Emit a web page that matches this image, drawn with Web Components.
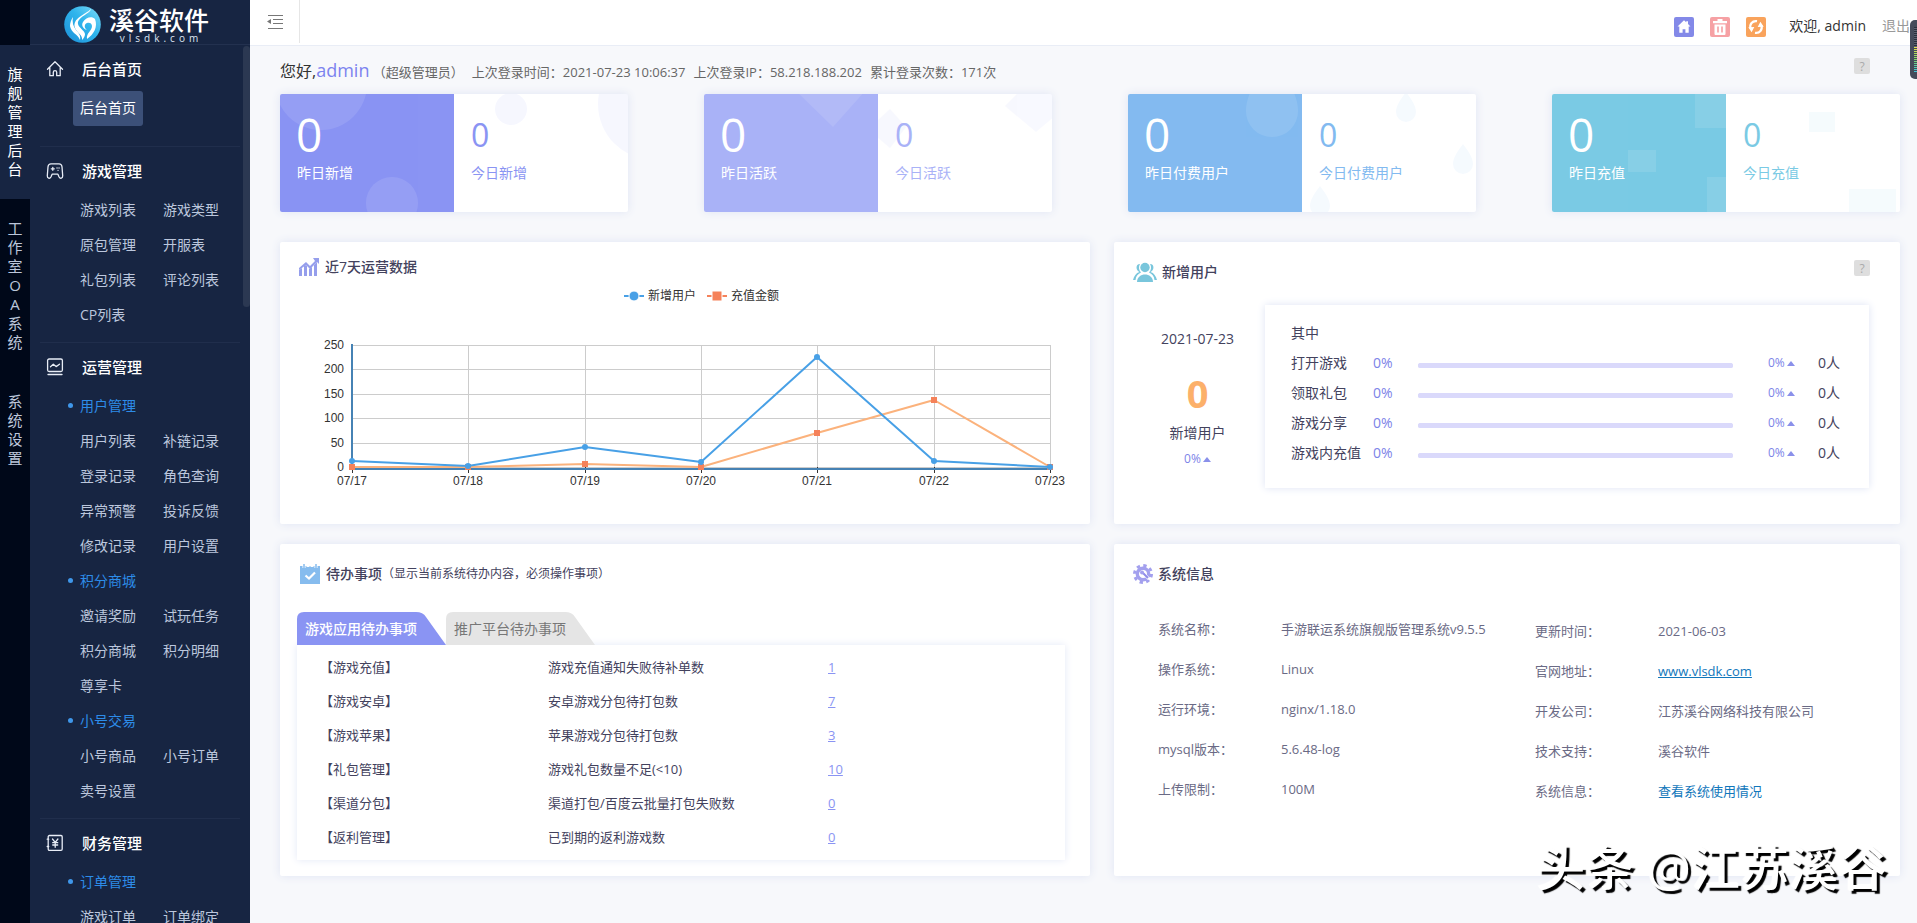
<!DOCTYPE html>
<html lang="zh-CN">
<head>
<meta charset="utf-8">
<title>溪谷软件 - 后台首页</title>
<style>
  html, body { margin: 0; height: 100%; }
  body {
    font: 14px/20px "Open Sans", "Noto Sans CJK SC", sans-serif;
    color: #43425d;
    background: #f7f8fb;
    overflow: hidden;
  }
</style>
</head>
<body>
<admin-app></admin-app>
<script>
const define = (name, html, setup) => {
  const template = document.createElement('template');
  template.innerHTML = html;
  customElements.define(name, class extends HTMLElement {
    constructor() {
      super();
      this.attachShadow({ mode: 'open' }).append(template.content.cloneNode(true));
    }
    connectedCallback() {
      if (setup && !this.ready) { this.ready = true; setup(this, this.shadowRoot); }
    }
  });
};

/* ---------- left rail ---------- */
define('side-rail', `
  <style>
    :host { display: block; width: 30px; flex: none; background: #000819; padding-top: 45px; box-sizing: border-box; }
    a { display: flex; justify-content: center; padding: 20px 0; color: #bcc6da; text-decoration: none; }
    span { width: 15px; font-size: 15px; line-height: 19px; text-align: center; word-break: break-all; }
    a.on { background: #172542; color: #fff; }
  </style>
  <a class="on" href="#main"><span>旗舰管理后台</span></a>
  <a href="#oa"><span>工作室OA系统</span></a>
  <a href="#settings"><span>系统设置</span></a>
`);

/* ---------- logo ---------- */
define('brand-logo', `
  <style>
    :host { display: flex; height: 45px; padding-left: 34px; gap: 8px; align-items: center; box-sizing: border-box; border-bottom: 1px solid #23314f; flex: none; }
    svg { width: 37px; height: 37px; margin-top: 4px; flex: none; }
    div { display: flex; flex-direction: column; align-items: center; color: #fff; padding-top: 6px; }
    b { font-size: 25px; line-height: 26px; font-weight: 500; }
    small { font-size: 10px; line-height: 10px; letter-spacing: 4px; padding-left: 4px; color: #dfe6f2; }
  </style>
  <svg viewBox="0 0 37 37">
    <defs><linearGradient id="g" x1="0" y1="1" x2="1" y2="0">
      <stop offset="0" stop-color="#1b8fd8"/><stop offset=".55" stop-color="#2fb4ec"/><stop offset="1" stop-color="#7fdcf8"/>
    </linearGradient></defs>
    <circle cx="18.500" cy="18.500" r="18.300" fill="url(#g)"/>
    <g fill="#fff">
      <path d="M27 3c-1 5-14 8-13 15 1 4 6 6 7 10 0 2-1 4-3 6 1-5-5-7-7-12C8 12 21 9 27 3z"/>
      <path d="M9 11c-1 5 0 9 3 13 3 3 5 6 4 10-2-6-9-7-10-14 0-3 1-6 3-9z"/>
      <path d="M31 13c3 8-1 15-8 20-1-6 5-8 5-13 0-3-3-4-5-3-3 1-3 5 0 7-4-1-6-5-4-8 3-5 9-6 12-3z"/>
    </g>
  </svg>
  <div><b>溪谷软件</b><small>vlsdk.com</small></div>
`);

/* ---------- menu ---------- */
define('menu-group', `
  <style>
    :host { display: block; margin: 0 10px 0 10px; padding: 14px 0 9px; border-bottom: 1px solid #202e4c; }
    :host(.first) { padding-bottom: 20px; }
    header { display: flex; align-items: center; gap: 18px; padding-left: 6px; height: 20px; color: #fff; font-size: 15px; font-weight: 500; margin-bottom: 12px; }
    ::slotted(svg) { width: 18px; height: 18px; }
    nav { display: grid; grid-template-columns: 70px 70px; column-gap: 13px; padding-left: 33px; }
  </style>
  <header><slot name="icon"></slot><span id="t"></span></header>
  <nav><slot></slot></nav>
`, (el, root) => { root.getElementById('t').textContent = el.getAttribute('label'); });

define('menu-item', `
  <style>
    :host { display: block; height: 35px; }
    a { display: block; line-height: 33px; padding: 0 0 2px 7px; font-size: 14px; color: #bcc7dd; text-decoration: none; border-radius: 3px; white-space: nowrap; }
    :host([on]) a { background: #3c5078; color: #fff; }
    :host([head]) { grid-column: 1 / -1; }
    :host([head]) a { color: #2d8ce8; padding: 0 0 2px; display: flex; align-items: center; gap: 6px; margin-left: -5px; }
    :host([head]) a::before { content: ""; width: 5px; height: 5px; border-radius: 50%; background: #3f97ea; margin-right: 1px; }
  </style>
  <a href="#"><slot></slot></a>
`);

define('side-menu', `
  <style>
    :host { display: flex; flex-direction: column; position: relative; width: 220px; flex: none; background: #172542; overflow: hidden; }
    .list { flex: 1; min-height: 0; overflow: hidden; }
    .thumb { position: absolute; right: 0; top: 46px; width: 7px; height: 261px; border-radius: 4px; background: #2b3852; }
    svg { fill: none; stroke: #e8edf6; stroke-width: 1.300; stroke-linejoin: round; stroke-linecap: round; }
  </style>
  <brand-logo></brand-logo>
  <div class="list">
    <menu-group class="first" label="后台首页">
      <svg slot="icon" viewBox="0 0 18 18"><path d="M1.500 9.200 9 1.800l7.500 7.400M3.800 7.500v8.200h3.500v-3.400a1.700 1.700 0 0 1 3.400 0v3.400h3.500V7.500"/></svg>
      <menu-item on>后台首页</menu-item>
    </menu-group>
    <menu-group label="游戏管理">
      <svg slot="icon" viewBox="0 0 18 18"><path d="M5 1.800h8c2 0 2.800 1.200 3 3l.7 9c.1 2.700-2.500 3.200-3.600 1.200l-1.200-2.800H6.100L4.900 15c-1.100 2-3.700 1.500-3.600-1.200l.7-9c.2-1.800 1-3 3-3zM5.300 6.800h3M6.800 5.300v3"/><path d="M11 6h.1M13 6h.1M12 8.300h.1"/></svg>
      <menu-item>游戏列表</menu-item><menu-item>游戏类型</menu-item>
      <menu-item>原包管理</menu-item><menu-item>开服表</menu-item>
      <menu-item>礼包列表</menu-item><menu-item>评论列表</menu-item>
      <menu-item>CP列表</menu-item>
    </menu-group>
    <menu-group label="运营管理">
      <svg slot="icon" viewBox="0 0 18 18"><rect x="1.600" y="1" width="14.800" height="12.500" rx="1.500"/><path d="M4.500 8.700l2.800-2.500 2.800 2.400 3.400-2.400M2 16.500h14"/></svg>
      <menu-item head>用户管理</menu-item>
      <menu-item>用户列表</menu-item><menu-item>补链记录</menu-item>
      <menu-item>登录记录</menu-item><menu-item>角色查询</menu-item>
      <menu-item>异常预警</menu-item><menu-item>投诉反馈</menu-item>
      <menu-item>修改记录</menu-item><menu-item>用户设置</menu-item>
      <menu-item head>积分商城</menu-item>
      <menu-item>邀请奖励</menu-item><menu-item>试玩任务</menu-item>
      <menu-item>积分商城</menu-item><menu-item>积分明细</menu-item>
      <menu-item>尊享卡</menu-item>
      <menu-item head>小号交易</menu-item>
      <menu-item>小号商品</menu-item><menu-item>小号订单</menu-item>
      <menu-item>卖号设置</menu-item>
    </menu-group>
    <menu-group label="财务管理">
      <svg slot="icon" viewBox="0 0 18 18"><rect x="2.200" y="1.500" width="14" height="14.800" rx="1.200"/><path d="M6.500 5l2.700 3.300L11.900 5M9.200 8.300v5M6.700 8.700h5M6.700 11h5M1.200 5.200h1.500M1.200 12.500h1.500"/></svg>
      <menu-item head>订单管理</menu-item>
      <menu-item>游戏订单</menu-item><menu-item>订单绑定</menu-item>
    </menu-group>
  </div>
  <div class="thumb"></div>
`);

/* ---------- top bar ---------- */
define('top-bar', `
  <style>
    :host { display: flex; align-items: center; height: 46px; box-sizing: border-box; background: #fff; border-bottom: 1px solid #e9edf6; padding-right: 7px; flex: none; }
    button { border: 0; padding: 0; background: none; cursor: pointer; display: block; }
    svg { display: block; }
    .fold { width: 50px; height: 43px; border-right: 1px solid #e6e6e6; padding: 0 0 0 17px; align-self: flex-start; box-sizing: border-box; }
    .tools { margin-left: auto; display: flex; gap: 16px; margin-top: 8px; }
    .user { margin: 6px 0 0 23px; color: #333; white-space: nowrap; }
    a { margin: 6px 0 0 16px; color: #999; text-decoration: none; white-space: nowrap; }
  </style>
  <button class="fold" aria-label="收起菜单"><svg width="17" height="16" viewBox="0 0 17 16" fill="none" stroke="#777"><path d="M1 1.500h15M6 5.500h10M6 9.500h10M1 14.500h15"/><path d="M4 5v5L0 7.500z" fill="#777" stroke="none"/></svg></button>
  <div class="tools">
    <button aria-label="首页"><svg width="20" height="20"><rect width="20" height="20" rx="2" fill="#8389e8"/><path d="M10 3.200 3.500 9.600h1.800v6.200h3.300v-3.600h2.800v3.600h3.300V9.600h1.800L14 7V4.300h-1.800v1z" fill="#fff"/></svg></button>
    <button aria-label="清除缓存"><svg width="20" height="20"><rect width="20" height="20" rx="2" fill="#f6a1a4"/><path d="M7.500 2h5v2H17v2.200H3V4h4.500zM4.500 7.500h11V17q0 1-1 1h-9q-1 0-1-1z" fill="#fff"/><path d="M8 9.500v6M12 9.500v6" stroke="#f6a1a4" stroke-width="1.600"/></svg></button>
    <button aria-label="刷新"><svg width="20" height="20"><rect width="20" height="20" rx="2" fill="#f9a35c"/><path d="M11 4.200C6.300 3.400 3.300 7.500 4.600 11.500M9 15.800c4.700.8 7.700-3.300 6.400-7.300" fill="none" stroke="#fff" stroke-width="2.200"/><path d="M2.300 10.300l6-.4-2.700 5.300zM17.700 9.700l-6 .4 2.700-5.300z" fill="#fff"/></svg></button>
  </div>
  <span class="user">欢迎, admin</span>
  <a href="#logout">退出</a>
`);

define('help-badge', `
  <style>
    :host { display: block; }
    button { display: block; width: 16px; height: 16px; padding: 0; border: 0; border-radius: 2px; background: #dedede; color: #aaa; font: 12px/15px "Open Sans", sans-serif; }
  </style>
  <button aria-label="帮助">?</button>
`);

define('greet-line', `
  <style>
    :host { display: flex; align-items: center; height: 48px; padding-right: 30px; }
    p { margin: 0 auto 0 0; font-size: 13px; color: #666; white-space: nowrap; line-height: 28px; padding-top: 1px; display: flex; align-items: baseline; gap: 8px; }
    b { font-weight: 400; font-size: 16px; color: #333; }
    i { font-style: normal; font-size: 18px; color: #7c83ef; }
    help-badge { margin-bottom: 8px; }
  </style>
  <p><span><b>您好,</b><i>admin</i>&nbsp;（超级管理员）</span><span>上次登录时间：2021-07-23 10:06:37</span><span>上次登录IP：58.218.188.202</span><span>累计登录次数：171次</span></p>
  <help-badge></help-badge>
`);

/* ---------- stat cards ---------- */
const drop = (x, y, r) => `<path d="M${x} ${y - r * 2}C${x + r / 2} ${y - r * 1.3} ${x + r} ${y - r * .7} ${x + r} ${y}A${r} ${r} 0 0 1 ${x - r} ${y}C${x - r} ${y - r * .7} ${x - r / 2} ${y - r * 1.3} ${x} ${y - r * 2}z"/>`;
const DECOR = {
  circle: ['<circle cx="41" cy="-10" r="46"/><circle cx="112" cy="109" r="26"/>', '<circle cx="57" cy="15" r="16"/><circle cx="200" cy="10" r="56"/>'],
  diamond: ['<path d="M91-4h71l-33 37z"/>', '<path d="M127 12l30-30 32 30-31 26z"/><path d="M-10 35l22-20 16 18-16 21z"/>'],
  drop: [drop(144, 17, 26), drop(104, 18, 10) + drop(161, 70, 10) + drop(18, 112, 10)],
  square: ['<path d="M143 0h31v34h-31zM76 56h28v22H76zM155 83h19v35h-19z"/>', '<path d="M83 18h26v20H83zM123 95h47v23h-47z"/>']
};
define('stat-card', `
  <style>
    :host { display: grid; grid-template-columns: 1fr 1fr; flex: 1; height: 118px; border-radius: 2px; overflow: hidden; box-shadow: 0 0 10px #dfe4f3; background: #fff; }
    div { position: relative; display: flex; flex-direction: column; padding: 13px 17px 0; color: var(--c); }
    strong { font-weight: 400; line-height: 55px; height: 56px; font-size: 32px; }
    .y strong { font-size: 46px; font-weight: 500; margin-left: -1px; }
    span { white-space: nowrap; }
    .y { background: var(--c); color: #fff; }
    svg { position: absolute; inset: 0; width: 100%; height: 100%; fill: var(--c); opacity: .080; }
    .y svg { fill: #fff; opacity: .100; }
  </style>
  <div class="y"><svg></svg><strong></strong><span></span></div>
  <div class="t"><svg></svg><strong></strong><span></span></div>
`, (el, root) => {
  el.style.setProperty('--c', el.getAttribute('color'));
  ['yesterday', 'today'].forEach((k, i) => {
    const d = root.querySelectorAll('div')[i];
    d.querySelector('svg').innerHTML = DECOR[el.getAttribute('decor')][i];
    d.querySelector('strong').textContent = el.getAttribute(k);
    d.querySelector('span').textContent = (i ? '今日' : '昨日') + el.getAttribute('label');
  });
});

/* ---------- panel ---------- */
define('info-panel', `
  <style>
    :host { display: block; background: #fff; border-radius: 2px; box-shadow: 0 0 10px #dfe4f3; box-sizing: border-box; min-width: 0; }
    header { display: flex; align-items: center; gap: 5px; padding: 19px 30px 1px 19px; height: 22px; }
    :host([tight]) header { padding: 14px 30px 6px 18px; }
    ::slotted(svg) { width: 22px; height: 20px; flex: none; }
    h2 { margin: 0; font-size: 14px; font-weight: 500; line-height: 20px; white-space: nowrap; }
    small { font-size: 12px; margin-left: -5px; }
  </style>
  <header><slot name="icon"></slot><h2></h2><small></small><slot name="extra"></slot></header>
  <slot></slot>
`, (el, root) => {
  root.querySelector('h2').textContent = el.getAttribute('label');
  const note = el.getAttribute('note');
  if (note) root.querySelector('small').textContent = note; else root.querySelector('small').remove();
});

/* ---------- line chart ---------- */
define('trend-chart', `
  <style>
    :host { display: block; }
    .legend { display: flex; justify-content: center; gap: 11px; font-size: 12px; line-height: 16px; color: #333; padding: 4px 0 0 33px; }
    .legend span { display: flex; align-items: center; gap: 4px; }
    #plot { display: block; width: 100%; height: 195px; }
    text { font: 12px "Liberation Sans", sans-serif; fill: #333; }
  </style>
  <div class="legend">
    <span><svg width="20" height="10"><path d="M0 5h20" stroke="#48a0e6" stroke-width="2"/><circle cx="10" cy="5" r="5" fill="#48a0e6" stroke="#fff"/></svg>新增用户</span>
    <span><svg width="20" height="10"><path d="M0 5h20" stroke="#f5825a" stroke-width="2"/><path d="M5 0h10v10H5z" fill="#f5825a" stroke="#fff"/></svg>充值金额</span>
  </div>
  <svg id="plot"></svg>
`, (el, root) => {
  const days = ['07/17', '07/18', '07/19', '07/20', '07/21', '07/22', '07/23'];
  const users = [12, 2, 40, 11, 226, 12, 0];
  const money = [0, 0, 7, 0, 70, 137, 0];
  const plot = root.getElementById('plot');
  const draw = () => {
    const left = 72, right = plot.clientWidth - 40, top = 41, base = 163;
    const x = i => Math.round(left + (right - left) * i / 6);
    const y = v => Math.round(base - (base - top) * v / 250);
    let s = '';
    for (let v = 0; v <= 250; v += 50)
      s += `<path d="M${left} ${y(v)}.500H${right}" stroke="#ccc"/><text x="${left - 8}" y="${y(v) + 4}" text-anchor="end">${v}</text>`;
    days.forEach((d, i) => {
      s += `<path d="M${x(i)}.500 ${top}V${base}" stroke="#ccc"/><path d="M${x(i)}.500 ${base}v6" stroke="#333"/><text x="${x(i)}" y="${base + 18}" text-anchor="middle">${d}</text>`;
    });
    s += `<path d="M${left} ${top - 1}V${base + 2}H${right}" fill="none" stroke="#4682b4" stroke-width="2"/>`;
    const line = (a, c) => `<polyline points="${a.map((v, i) => x(i) + ',' + y(v)).join(' ')}" fill="none" stroke="${c}" stroke-width="2" stroke-linejoin="round"/>`;
    s += line(money, '#fbb27c') + money.map((v, i) => `<rect x="${x(i) - 3}" y="${y(v) - 3}" width="6" height="6" fill="#f5825a"/>`).join('');
    s += line(users, '#48a0e6') + users.map((v, i) => `<circle cx="${x(i)}" cy="${y(v)}" r="3" fill="#48a0e6"/>`).join('');
    plot.innerHTML = s;
  };
  draw();
  new ResizeObserver(draw).observe(plot);
});

/* ---------- new users ---------- */
define('rate-row', `
  <style>
    :host { display: grid; grid-template-columns: 82px 45px 1fr 35px 50px 51px; align-items: center; height: 30px; white-space: nowrap; }
    b, em { font-weight: 400; font-style: normal; color: #7c83e8; }
    em { grid-column: 5; font-size: 12px; display: flex; align-items: center; gap: 2px; }
    em::after { content: ""; border: 4px solid transparent; border-top: 0; border-bottom: 5px solid #8a90ea; }
    progress { appearance: none; width: 100%; height: 5px; border: 0; border-radius: 3px; background: #dad9fb; margin-top: 4px; }
    progress::-webkit-progress-bar { background: #dad9fb; border-radius: 3px; }
    progress::-webkit-progress-value { background: #8a94f3; }
  </style>
  <label for="p"></label><b>0%</b><progress id="p" value="0" max="100"></progress><em>0%</em><span>0人</span>
`, (el, root) => { root.querySelector('label').textContent = el.getAttribute('label'); });

define('new-users', `
  <style>
    :host { display: flex; padding: 21px 31px 36px 0; }
    .sum { width: 167px; margin-right: -16px; box-sizing: border-box; text-align: center; padding-top: 24px; display: flex; flex-direction: column; flex: none; }
    .sum strong { font-size: 38px; line-height: 50px; color: #fcb06a; margin: 19px 0 5px; }
    .sum em { font-style: normal; font-size: 12px; line-height: 16px; color: #7c83e8; margin-top: 8px; display: flex; justify-content: center; align-items: center; gap: 2px; }
    .sum em::after { content: ""; border: 4px solid transparent; border-top: 0; border-bottom: 5px solid #8a90ea; }
    .box { flex: 1; min-width: 0; height: 183px; box-sizing: border-box; padding: 18px 0 0 26px; box-shadow: 0 0 8px #dde3f4; }
    .box div { margin-bottom: 5px; }
  </style>
  <div class="sum"><span>2021-07-23</span><strong>0</strong><span>新增用户</span><em>0%</em></div>
  <div class="box">
    <div>其中</div>
    <rate-row label="打开游戏"></rate-row>
    <rate-row label="领取礼包"></rate-row>
    <rate-row label="游戏分享"></rate-row>
    <rate-row label="游戏内充值"></rate-row>
  </div>
`);

/* ---------- todo ---------- */
define('todo-list', `
  <style>
    :host { display: block; padding: 26px 25px 16px 17px; }
    .tabs { display: flex; position: relative; }
    button { width: 149px; height: 33px; border: 0; padding: 0 0 0 8px; text-align: left; background: none; font: 14px/33px "Open Sans", "Noto Sans CJK SC", sans-serif; color: #777; position: relative; white-space: nowrap; }
    button.on { color: #fff; font-weight: 500; }
    button svg { position: absolute; inset: 0; fill: #e5e5e5; }
    button.on svg { fill: #8a94f3; }
    button span { position: relative; }
    .body { padding: 5px 0 6px; box-shadow: 0 0 8px #e3e8f6; background: #fff; }
    table { border-collapse: collapse; table-layout: fixed; width: 100%; font-size: 13px; }
    td { height: 34px; padding: 0; line-height: 20px; white-space: nowrap; }
    td:first-child { padding-left: 23px; width: 228px; }
    td:nth-child(2) { width: 280px; }
    td a { color: #8a94f3; }
  </style>
  <div class="tabs">
    <button class="on"><svg width="149" height="33"><path d="M0 33V7q0-7 7-7h112q7 0 10 5l20 28z"/></svg><span>游戏应用待办事项</span></button>
    <button><svg width="149" height="33"><path d="M0 33V7q0-7 7-7h112q7 0 10 5l20 28z"/></svg><span>推广平台待办事项</span></button>
  </div>
  <div class="body"><table>
    <tr><td>【游戏充值】</td><td>游戏充值通知失败待补单数</td><td><a href="#">1</a></td></tr>
    <tr><td>【游戏安卓】</td><td>安卓游戏分包待打包数</td><td><a href="#">7</a></td></tr>
    <tr><td>【游戏苹果】</td><td>苹果游戏分包待打包数</td><td><a href="#">3</a></td></tr>
    <tr><td>【礼包管理】</td><td>游戏礼包数量不足(&lt;10)</td><td><a href="#">10</a></td></tr>
    <tr><td>【渠道分包】</td><td>渠道打包/百度云批量打包失败数</td><td><a href="#">0</a></td></tr>
    <tr><td>【返利管理】</td><td>已到期的返利游戏数</td><td><a href="#">0</a></td></tr>
  </table></div>
`);

/* ---------- system info ---------- */
define('sys-info', `
  <style>
    :host { display: flex; padding: 23px 30px 0 44px; font-size: 13px; color: #6a6a85; }
    dl { margin: 0; display: grid; grid-template-columns: 123px 1fr; grid-auto-rows: 40px; align-items: center; white-space: nowrap; width: 377px; align-content: start; }
    dl + dl { flex: 1; padding-top: 2px; }
    dd { margin: 0; }
    a { color: #1177bb; }
    a.plain { text-decoration: none; }
  </style>
  <dl>
    <dt>系统名称：</dt><dd>手游联运系统旗舰版管理系统v9.5.5</dd>
    <dt>操作系统：</dt><dd>Linux</dd>
    <dt>运行环境：</dt><dd>nginx/1.18.0</dd>
    <dt>mysql版本：</dt><dd>5.6.48-log</dd>
    <dt>上传限制：</dt><dd>100M</dd>
  </dl>
  <dl>
    <dt>更新时间：</dt><dd>2021-06-03</dd>
    <dt>官网地址：</dt><dd><a href="#site">www.vlsdk.com</a></dd>
    <dt>开发公司：</dt><dd>江苏溪谷网络科技有限公司</dd>
    <dt>技术支持：</dt><dd>溪谷软件</dd>
    <dt>系统信息：</dt><dd><a class="plain" href="#usage">查看系统使用情况</a></dd>
  </dl>
`);

/* ---------- overlays ---------- */
define('level-meter', `
  <style>
    :host { position: fixed; right: 0; top: 20px; width: 7px; height: 59px; border-radius: 5px 0 0 5px; background: #454b5a; }
    i { position: absolute; right: 0; width: 3px; }
    i.a { top: 7px; height: 20px; background: repeating-linear-gradient(#2a2f3b 0 1px, #5b6170 1px 2px); }
    i.b { top: 27px; height: 25px; background: repeating-linear-gradient(transparent 0 1px, #454b5a 1px 2px), linear-gradient(#e8e04a, #7fd66a 50%, #3fc4d8); }
  </style>
  <i class="a"></i><i class="b"></i>
`);
define('water-mark', `
  <style>
    :host { position: fixed; right: 30px; bottom: 22px; font-size: 49px; line-height: 68px; font-weight: 500; color: #fff; text-shadow: 3px 3px 1px #000, -1px -1px 1px #fff; white-space: nowrap; pointer-events: none; }
  </style>
  <slot></slot>
`);

/* ---------- app ---------- */
define('admin-app', `
  <style>
    :host { display: flex; height: 100vh; }
    .main { flex: 1; min-width: 0; display: flex; flex-direction: column; }
    main { flex: 1; min-height: 0; overflow: hidden; padding: 0 17px 0 30px; }
    .stats { display: flex; gap: 76px; margin-bottom: 30px; }
    .grid { display: grid; grid-template-columns: 810fr 786fr; gap: 20px 24px; grid-template-rows: 282px 332px; }
    help-badge { margin: 0 0 8px auto; }
  </style>
  <side-rail></side-rail>
  <side-menu></side-menu>
  <div class="main">
    <top-bar></top-bar>
    <main>
      <greet-line></greet-line>
      <div class="stats">
        <stat-card color="#8a94f3" decor="circle" label="新增" yesterday="0" today="0"></stat-card>
        <stat-card color="#a9b2f7" decor="diamond" label="活跃" yesterday="0" today="0"></stat-card>
        <stat-card color="#83baf0" decor="drop" label="付费用户" yesterday="0" today="0"></stat-card>
        <stat-card color="#7acae4" decor="square" label="充值" yesterday="0" today="0"></stat-card>
      </div>
      <div class="grid">
        <info-panel tight label="近7天运营数据">
          <svg slot="icon" viewBox="0 0 22 20"><g fill="#959eec"><path d="M1 13l3-2v8H1zM6 9l2-1 1 1v10H6zM11 12l3-2v9h-3zM16 8l3-3v14h-3z"/><path d="M15 1h6v6l-2-2-7 7-4-4-7 5v-2l7-6 4 4 5-5z"/></g></svg>
          <trend-chart></trend-chart>
        </info-panel>
        <info-panel label="新增用户">
          <svg slot="icon" viewBox="0 0 24 20" style="width:24px"><g fill="#79c6dc"><circle cx="12" cy="5.500" r="4.700"/><path d="M4 20c0-10 16-10 16 0z"/><path d="M7 2C2 2 3 9 6.500 10 3 11 1 14 0 18h2.500c.5-4 2.500-6 5.500-7.500C5.500 8 5.500 4.500 7 2zM17 2c5 0 4 7 .5 8 3.500 1 5.500 4 6.500 8h-2.500c-.5-4-2.500-6-5.500-7.500 2.500-2.500 2.500-6 1-8.500z"/></g></svg>
          <help-badge slot="extra"></help-badge>
          <new-users></new-users>
        </info-panel>
        <info-panel label="待办事项" note="（显示当前系统待办内容，必须操作事项）">
          <svg slot="icon" viewBox="0 0 22 20"><path d="M1 2h20v18H1z" fill="#86bcee"/><path d="M5 0v4M9 0v3M13 0v3M17 0v4" stroke="#fff" stroke-width="3"/><path d="M5 0v4M17 0v4" stroke="#86bcee" stroke-width="1.500"/><path d="M6.500 11.500l3.500 3 6-6" fill="none" stroke="#fff" stroke-width="2.200"/></svg>
          <todo-list></todo-list>
        </info-panel>
        <info-panel label="系统信息">
          <svg slot="icon" viewBox="0 0 20 20" style="width:20px"><circle cx="10" cy="10" r="8.500" fill="none" stroke="#a3a0ee" stroke-width="3" stroke-dasharray="3.340"/><circle cx="10" cy="10" r="5.700" fill="none" stroke="#a3a0ee" stroke-width="3.400"/><path d="M10 9l6 6" stroke="#fff" stroke-width="3"/><path d="M9 8l6 6" stroke="#8f8be8" stroke-width="2"/><circle cx="9" cy="8.500" r="2" fill="#a3a0ee"/></svg>
          <sys-info></sys-info>
        </info-panel>
      </div>
    </main>
  </div>
  <level-meter></level-meter>
  <water-mark>头条 @江苏溪谷</water-mark>
`);
</script>
</body>
</html>
